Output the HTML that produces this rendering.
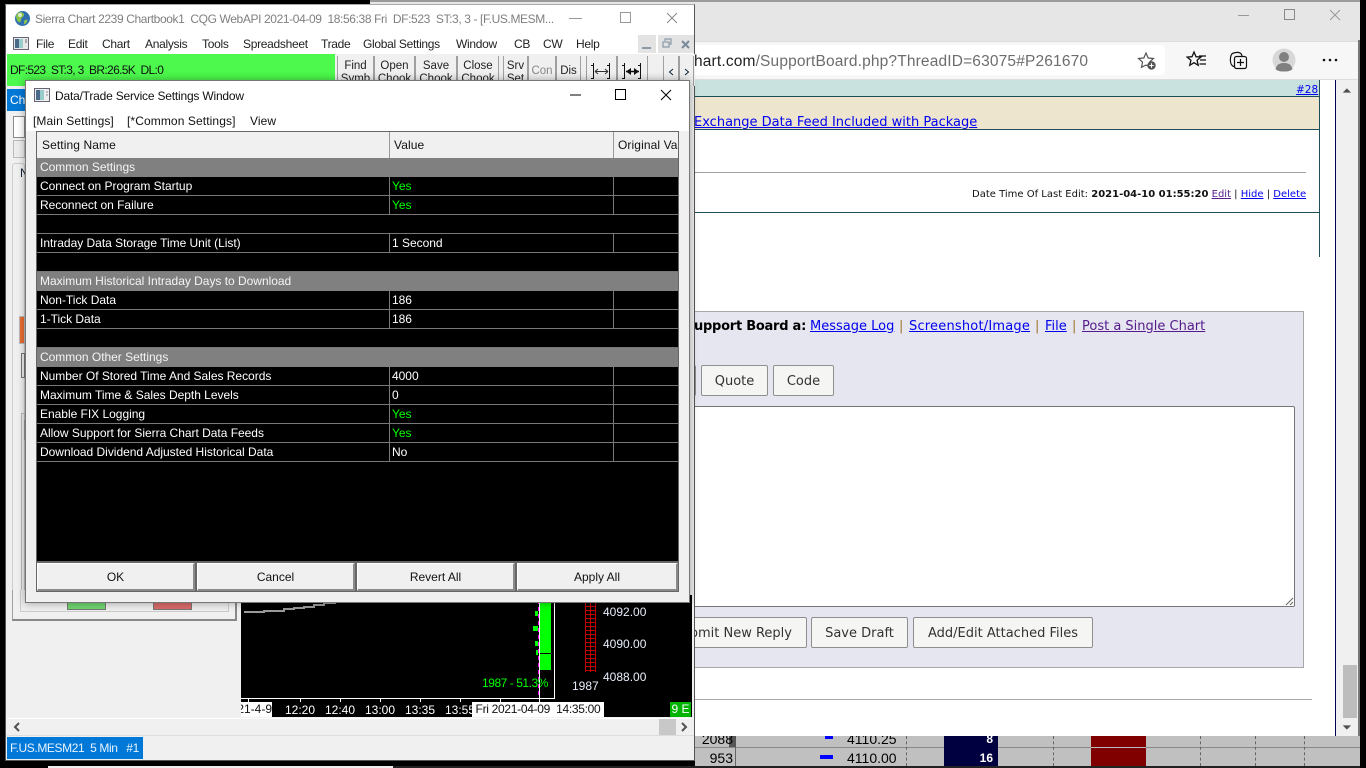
<!DOCTYPE html>
<html><head><meta charset="utf-8"><style>
html,body{margin:0;padding:0;width:1366px;height:768px;overflow:hidden;background:#000}
div,svg{position:absolute}
div{white-space:nowrap;box-sizing:border-box}
body{font:12px "Liberation Sans",sans-serif;color:#000}
.w{font-family:"DejaVu Sans",sans-serif;font-size:13px}
a{color:#00e;text-decoration:underline}
a.v{color:#551a8b}
.b{background:#f5f5f3;border:1px solid #8f8f8f;border-radius:2px;font:13px/27px "DejaVu Sans",sans-serif;color:#333;text-align:center}
.m{top:37px;font-size:12px;line-height:14px;letter-spacing:-.3px;color:#222}
.r{left:37px;width:641px;height:19px;background:#000;border-bottom:1px solid #777;color:#fff;line-height:18px}
.r.h{background:#808080;color:#f4f4f4;border-bottom:0}
.r span{position:absolute;white-space:nowrap;letter-spacing:-.02px}
.r .n{left:3px}.r .val{left:355px}
.r:not(.h):not(.e)::before{content:"";position:absolute;left:352px;top:0;width:1px;height:19px;background:#777}
.r:not(.h):not(.e)::after{content:"";position:absolute;left:576px;top:0;width:1px;height:19px;background:#777}
.y{color:#0f0}
.tb{top:56px;height:30px;background:#f0f0f0;border-left:1px solid #a0a0a0;border-right:1px solid #a0a0a0;text-align:center;line-height:13px;font-size:11.5px;padding-top:3px;color:#222;overflow:hidden}
.ok{top:563px;height:28px;background:#f0f0f0;border:1px solid #fff;border-right:2px solid #8a8a8a;border-bottom:2px solid #8a8a8a;text-align:center;line-height:27px;color:#111}
.ax{top:703px;color:#fff;font-size:12px;line-height:14px}
.g{color:#e8eefc;font-size:12px;line-height:14px}
.d{top:736px;height:30px;border-left:1px dashed #666}
</style></head><body>

<!-- background bottom table -->
<div style="left:695px;top:736px;width:665px;height:30px;background:#c0c0c0"></div>
<div style="left:695px;top:747px;width:665px;height:1px;background:#888"></div>
<div style="left:729px;top:736px;width:7px;height:11px;background:#555"></div>
<div style="left:735px;top:747px;width:1px;height:19px;background:#666"></div>
<div style="left:944px;top:736px;width:54px;height:30px;background:#000040"></div>
<div style="left:1091px;top:736px;width:55px;height:30px;background:#800000"></div>
<div style="left:1091px;top:747px;width:55px;height:1px;background:#bbb"></div>
<div style="left:696px;top:731px;width:37px;text-align:right;font-size:14px;line-height:16px;">2088</div>
<div style="left:696px;top:750px;width:37px;text-align:right;font-size:14px;line-height:16px;">953</div>
<div style="left:825px;top:736px;width:8px;height:3px;background:#00f"></div>
<div style="left:820px;top:755px;width:13px;height:4px;background:#00f"></div>
<div style="left:847px;top:731px;font-size:14px;line-height:16px">4110.25</div>
<div style="left:847px;top:750px;font-size:14px;line-height:16px">4110.00</div>
<div style="left:944px;top:731px;width:49px;text-align:right;color:#fff;font-weight:bold;font-size:12px;line-height:16px">8</div>
<div style="left:944px;top:750px;width:49px;text-align:right;color:#fff;font-weight:bold;font-size:12px;line-height:16px">16</div>
<div class="d" style="left:906px"></div>
<div class="d" style="left:1053px"></div>
<div class="d" style="left:1200px"></div>
<div class="d" style="left:1255px"></div>
<div class="d" style="left:1304px"></div>
<div style="left:48px;top:766px;width:345px;height:2px;background:#eee"></div>
<div style="left:393px;top:766px;width:967px;height:2px;background:#222"></div>

<!-- Browser -->
<div style="left:370px;top:0;width:990px;height:41px;background:#e6e6e6;border-top:2px solid #9a9a9a"></div>
<div style="left:690px;top:41px;width:670px;height:39px;background:#f7f7f7;border-top:1px solid #dcdcdc;border-bottom:1px solid #ddd"></div>
<div style="left:690px;top:45px;width:475px;height:30px;background:#fff;border-radius:4px"></div>
<div style="left:694px;top:52px;font-size:15.5px;line-height:20px;letter-spacing:.16px;color:#222">hart.com<span style="color:#6d6d6d">/SupportBoard.php?ThreadID=63075#P261670</span></div>

<svg style="left:1237px;top:8px" width="14" height="14" viewBox="0 0 14 14"><path d="M1 7.500H12" stroke="#999" stroke-width="1"/></svg>
<svg style="left:1284px;top:9px" width="11" height="11"><rect x=".5" y=".5" width="10" height="10" fill="none" stroke="#888"/></svg>
<svg style="left:1329px;top:9px" width="12" height="12"><path d="M1 1L11 11M11 1L1 11" stroke="#999" stroke-width="1"/></svg>
<svg style="left:1136px;top:50px" width="22" height="22" viewBox="0 0 22 22"><path d="M10 3l2.200 5 5.300.5-4 3.600 1 5.200L10 15l-4.500 2.300 1-5.200-4-3.600L7.800 8z" fill="none" stroke="#555" stroke-width="1.200"/><circle cx="15.500" cy="15.500" r="4.200" fill="#555"/><path d="M13.300 15.500h4.400M15.500 13.300v4.400" stroke="#fff" stroke-width="1"/></svg>
<svg style="left:1185px;top:49px" width="22" height="22" viewBox="0 0 22 22"><path d="M9 3l2 4.700 4.800.4-3.700 3.200 1.100 5L9 13.700 4.800 16.300l1.100-5L2.200 8.100 7 7.700z" fill="none" stroke="#111" stroke-width="1.300"/><path d="M14 7h7M15 11h6M14.500 15h6.500" stroke="#111" stroke-width="1.200"/></svg>
<svg style="left:1228px;top:50px" width="22" height="22" viewBox="0 0 22 22"><path d="M7 17C3 16 2 13 2.500 8 3 4 4 3 8 2.500 11 2 13.500 3 14 6" fill="none" stroke="#111" stroke-width="1.200"/><rect x="6.500" y="6.500" width="12" height="12" rx="2" fill="#f7f7f7" stroke="#111" stroke-width="1.200"/><path d="M12.500 9v7M9 12.500h7" stroke="#111" stroke-width="1.200"/></svg>
<svg style="left:1272px;top:48px" width="24" height="24" viewBox="0 0 24 24"><circle cx="12" cy="12" r="11.500" fill="#d8d8d8"/><circle cx="12" cy="9" r="5" fill="#808080"/><path d="M3.500 21C5 16 8 15 12 15s7 1 8.500 6C18 23.500 15 23.500 12 23.500S6 23.500 3.500 21z" fill="#808080"/></svg>
<svg style="left:1322px;top:58px" width="16" height="4"><circle cx="2" cy="2" r="1.300" fill="#111"/><circle cx="8" cy="2" r="1.300" fill="#111"/><circle cx="14" cy="2" r="1.300" fill="#111"/></svg>

<!-- page -->
<div style="left:690px;top:80px;width:670px;height:656px;background:#fff"></div>
<div style="left:1336px;top:80px;width:24px;height:656px;background:#f0f0f0"></div>
<div style="left:1335px;top:80px;width:1px;height:656px;background:#000050"></div>
<div style="left:1358px;top:40px;width:2px;height:696px;background:#777"></div>
<div style="left:1319px;top:80px;width:1px;height:177px;background:#1f4e5a"></div>
<div style="left:690px;top:97px;width:629px;height:32px;background:#eee5cf"></div>
<div style="left:690px;top:80px;width:629px;height:16px;background:#c9e2df"></div>
<div style="left:690px;top:96px;width:629px;height:1px;background:#1f4e5a"></div>
<div style="left:690px;top:129px;width:629px;height:1px;background:#1f4e5a"></div>
<div style="left:690px;top:212px;width:629px;height:1px;background:#1f4e5a"></div>
<div style="left:690px;top:172px;width:616px;height:1px;background:#a0a0a0"></div>
<div class="w" style="left:1296px;top:84px;font-size:10.500px;line-height:13px"><a>#28</a></div>
<div class="w" style="left:694px;top:115px;line-height:16px"><a>Exchange Data Feed Included with Package</a></div>
<div class="w" style="left:972px;top:188px;font-size:10px;line-height:14px;color:#111">Date Time Of Last Edit: <b>2021-04-10 01:55:20</b> <a class="v">Edit</a> | <a>Hide</a> | <a>Delete</a></div>

<div style="left:690px;top:311px;width:614px;height:357px;background:#e6e6f0;border:1px solid #a8a8a8"></div>
<div class="w" style="left:694px;top:318px;line-height:17px;color:#000;font-weight:bold;letter-spacing:-.25px">upport Board a:</div>
<div class="w" style="left:810px;top:318px;line-height:17px"><a>Message Log</a></div>
<div class="w" style="left:899px;top:318px;line-height:17px;color:#a07830">|</div>
<div class="w" style="left:909px;top:318px;line-height:17px;letter-spacing:.2px"><a>Screenshot/Image</a></div>
<div class="w" style="left:1035px;top:318px;line-height:17px;color:#a07830">|</div>
<div class="w" style="left:1045px;top:318px;line-height:17px"><a>File</a></div>
<div class="w" style="left:1072px;top:318px;line-height:17px;color:#a07830">|</div>
<div class="w" style="left:1082px;top:318px;line-height:17px"><a class="v">Post a Single Chart</a></div>
<div class="b" style="left:690px;top:365px;width:6px;height:31px"></div>
<div class="b" style="left:701px;top:365px;width:67px;height:31px;line-height:31px">Quote</div>
<div class="b" style="left:773px;top:365px;width:61px;height:31px;line-height:31px">Code</div>
<div style="left:690px;top:406px;width:605px;height:201px;background:#fff;border:1px solid #767676;border-radius:2px"></div>
<svg style="left:1284px;top:596px" width="10" height="10"><path d="M2 9L9 2M6 9L9 6" stroke="#666"/></svg>
<div class="b" style="left:680px;top:617px;width:127px;height:31px;line-height:31px"><span style="position:absolute;right:14px">Submit New Reply</span></div>
<div class="b" style="left:811px;top:617px;width:97px;height:31px;line-height:31px">Save Draft</div>
<div class="b" style="left:913px;top:617px;width:180px;height:31px;line-height:31px">Add/Edit Attached Files</div>
<div style="left:690px;top:699px;width:622px;height:1px;background:#a8a8a8"></div>
<svg style="left:1340px;top:86px" width="14" height="10"><path d="M1 8L7 2L13 8z" fill="#505050" transform="translate(2 1) scale(.7)"/></svg>
<svg style="left:1340px;top:723px" width="14" height="10"><path d="M1 2L7 8L13 2z" fill="#505050" transform="translate(2 1) scale(.7)"/></svg>
<div style="left:1343px;top:665px;width:14px;height:53px;background:#bdbdbd"></div>

<!-- Sierra Chart window -->
<div style="left:0;top:0;width:370px;height:4px;background:#000"></div>
<div style="left:5px;top:4px;width:690px;height:757px;background:#f0f0f0;border:1px solid #555;border-top:1px solid #aaa"></div>
<div style="left:6px;top:5px;width:688px;height:68px;background:#fff"></div>
<svg style="left:14px;top:10px" width="17" height="17" viewBox="0 0 17 17"><circle cx="8.500" cy="8.500" r="7.500" fill="#2e6fb0"/><path d="M4 3c3-2 6 0 6 2s-3 2-3 5-3 3-4 0-2-4 1-7zM11 10c2-1 3 0 2 2s-3 3-3 1 0-2 1-3z" fill="#8bc34a"/><circle cx="6" cy="5" r="2" fill="#d8ecc0"/></svg>
<div style="left:35px;top:12px;font-size:12px;line-height:14px;color:#7f7f7f;letter-spacing:-.38px">Sierra Chart 2239 Chartbook1&nbsp; CQG WebAPI 2021-04-09&nbsp; 18:56:38 Fri&nbsp; DF:523&nbsp; ST:3, 3 - [F.US.MESM...</div>
<svg style="left:569px;top:13px" width="14" height="14"><path d="M0 5.500H13" stroke="#999"/></svg>
<svg style="left:620px;top:12px" width="11" height="11"><rect x=".5" y=".5" width="10" height="10" fill="none" stroke="#999"/></svg>
<svg style="left:666px;top:12px" width="12" height="12"><path d="M1 1L11 11M11 1L1 11" stroke="#888"/></svg>

<svg style="left:13px;top:37px" width="16" height="13" viewBox="0 0 16 13"><rect x=".5" y=".5" width="15" height="12" fill="#e8e8e8" stroke="#667"/><rect x="2" y="2" width="4" height="9" fill="#4a6a8a"/><rect x="6" y="2" width="4" height="9" fill="#9cc"/><path d="M12 3h2M12 5h2" stroke="#667"/></svg>
<div class="m" style="left:36px">File</div><div class="m" style="left:68px">Edit</div><div class="m" style="left:102px">Chart</div><div class="m" style="left:145px">Analysis</div><div class="m" style="left:202px">Tools</div><div class="m" style="left:243px">Spreadsheet</div><div class="m" style="left:321px">Trade</div><div class="m" style="left:363px">Global Settings</div><div class="m" style="left:456px">Window</div><div class="m" style="left:514px">CB</div><div class="m" style="left:543px">CW</div><div class="m" style="left:576px">Help</div>
<div style="left:638px;top:35px;width:18px;height:18px;background:#e3e3e3"></div>
<div style="left:658px;top:35px;width:18px;height:18px;background:#e3e3e3"></div>
<div style="left:676px;top:35px;width:18px;height:18px;background:#e3e3e3"></div>
<div style="left:642px;top:47px;width:9px;height:2px;background:#8a9aa8"></div>
<svg style="left:662px;top:38px" width="11" height="11"><path d="M3 3V1H9V6H7M1 4H7V9H1Z" fill="none" stroke="#8a9aa8" stroke-width="1.200"/></svg>
<svg style="left:680px;top:39px" width="11" height="11"><path d="M2 2L9 9M9 2L2 9" stroke="#7a8a98" stroke-width="2"/></svg>

<div style="left:7px;top:54px;width:328px;height:32px;background:#4cf94c"></div>
<div style="left:10px;top:63px;font-size:12px;line-height:14px;letter-spacing:-.65px;color:#111">DF:523&nbsp; ST:3, 3&nbsp; BR:26.5K&nbsp; DL:0</div>
<div style="left:335px;top:54px;width:360px;height:32px;background:#f0f0f0"></div>
<div class="tb" style="left:337px;width:37px;padding-top:4px">Find<br>Symb</div>
<div class="tb" style="left:374px;width:41px;padding-top:4px">Open<br>Chook</div>
<div class="tb" style="left:415px;width:42px;padding-top:4px">Save<br>Chook</div>
<div class="tb" style="left:457px;width:42px;padding-top:4px">Close<br>Chook</div>
<div class="tb" style="left:503px;width:25px;padding-top:4px">Srv<br>Set</div>
<div class="tb" style="left:528px;width:28px;padding-top:9px;color:#888">Con</div>
<div class="tb" style="left:556px;width:25px;padding-top:9px">Dis</div>
<div class="tb" style="left:586px;width:31px"></div>
<div class="tb" style="left:617px;width:31px"></div>
<svg style="left:590px;top:62px" width="24" height="20"><path d="M3.500 1V17M19.500 1V17M1 3.500H4M1 16.500H4M17 3.500H20M17 16.500H20" stroke="#111"/><path d="M5 9.500H18M5 9.500L8 7M5 9.500L8 12M18 9.500L15 7M18 9.500L15 12" stroke="#333" fill="none"/></svg>
<svg style="left:621px;top:62px" width="24" height="20"><path d="M3.500 1V17M19.500 1V17M1 3.500H4M1 16.500H4M17 3.500H20M17 16.500H20" stroke="#111"/><path d="M5 9.500H18" stroke="#111" stroke-width="1.500"/><path d="M5 9.500L10 6V13zM18 9.500L13 6V13z" fill="#111"/></svg>
<div class="tb" style="left:663px;width:16px"></div><div class="tb" style="left:679px;width:15px"></div>
<svg style="left:668px;top:68px" width="6" height="8"><path d="M5 1L1.500 4L5 7" fill="none" stroke="#123"/></svg>
<svg style="left:684px;top:68px" width="6" height="8"><path d="M1 1L4.500 4L1 7" fill="none" stroke="#123"/></svg>

<!-- behind dialog -->
<div style="left:7px;top:89px;width:18px;height:22px;background:#0078d7;color:#fff;line-height:22px;padding-left:3px;font-size:12px;overflow:hidden">Ch</div>
<div style="left:13px;top:116px;width:12px;height:22px;background:#fff;border:1px solid #8a8a8a"></div>
<div style="left:13px;top:140px;width:12px;height:18px;background:#ececec;border:1px solid #bbb"></div>
<div style="left:12px;top:163px;width:13px;height:430px;background:#f0f0f0;border:1px solid #ccc;border-radius:3px"></div>
<div style="left:20px;top:166px;font-size:12px;line-height:14px;color:#123">N</div>
<div style="left:19px;top:316px;width:6px;height:28px;background:#ea6d33;border:1px solid #bbb"></div>
<div style="left:21px;top:353px;width:4px;height:25px;border:1px solid #777;background:#f0f0f0"></div>
<div style="left:21px;top:413px;width:4px;height:189px;border:1px solid #bbb;background:#eee"></div>
<div style="left:24px;top:420px;width:1px;height:20px;background:#999"></div>
<div style="left:12px;top:590px;width:225px;height:31px;background:#f0f0f0;border:1px solid #a0a0a0;border-top:0;border-right:2px solid #888;border-bottom:2px solid #888"></div>
<div style="left:20px;top:590px;width:209px;height:22px;background:#eee;border:1px solid #ccc;border-top:0"></div>
<div style="left:67px;top:600px;width:39px;height:10px;background:#6fd56f;border:1px solid #777;border-top:0"></div>
<div style="left:153px;top:600px;width:39px;height:10px;background:#d96a6a;border:1px solid #777;border-top:0"></div>

<!-- chart -->
<div style="left:241px;top:595px;width:451px;height:122px;background:#000"></div>
<svg style="left:241px;top:595px" width="455" height="125" viewBox="241 595 455 125">
<path d="M244 612H264V611H284V609H294V608H304V607H314V605H324V603H336" stroke="#9a9a9a" stroke-width="2" fill="none"/>
<path d="M241 698.500H554.500V595" stroke="#fff" fill="none"/>
<rect x="539" y="600" width="12" height="70" fill="#0f0"/><path d="M539 653.500H551" stroke="#000"/>
<path d="M539.500 600V717" stroke="#fff"/>
<path d="M538.500 600V695" stroke="#f0f" stroke-dasharray="4 3"/>
<rect x="535" y="611" width="3" height="5" fill="#0f0"/><rect x="533" y="626" width="5" height="5" fill="#0f0"/><rect x="535" y="641" width="3" height="5" fill="#0f0"/><rect x="536" y="650" width="2" height="5" fill="#0f0"/>
<path d="M585 602.500H596M585 606.500H596M585 610.500H596M585 614.500H596M585 618.500H596M585 622.500H596M585 626.500H596M585 630.500H596M585 634.500H596M585 638.500H596M585 642.500H596M585 646.500H596M585 650.500H596M585 654.500H596M585 658.500H596M585 662.500H596M585 666.500H596M585 670.500H596M585.500 600V672M590.500 600V672M595.500 600V672" stroke="#c00000" stroke-width="1"/>
<path d="M248.500 698V702M300.500 698V702M340.500 698V702M380.500 698V702M420.500 698V702M460.500 698V702M500.500 698V702" stroke="#fff"/>
</svg>
<div class="g" style="left:603px;top:605px">4092.00</div>
<div class="g" style="left:603px;top:637px">4090.00</div>
<div class="g" style="left:603px;top:670px">4088.00</div>
<div style="left:482px;top:676px;color:#0f0;line-height:14px;font-size:12px;letter-spacing:-.45px">1987 - 51.3%</div>
<div class="g" style="left:572px;top:679px">1987</div>
<div style="left:241px;top:702px;width:31px;height:15px;background:#fff;color:#111;line-height:15px;overflow:hidden;direction:rtl;text-align:left;font-size:12px">21-4-9</div>
<div class="ax" style="left:285px">12:20</div><div class="ax" style="left:325px">12:40</div><div class="ax" style="left:365px">13:00</div><div class="ax" style="left:405px">13:35</div><div class="ax" style="left:445px">13:55</div>
<div style="left:472px;top:702px;width:132px;height:15px;background:#fff;color:#111;text-align:center;line-height:15px;font-size:12px;letter-spacing:-.3px">Fri 2021-04-09&nbsp; 14:35:00</div>
<div style="left:670px;top:702px;width:21px;height:15px;background:#00b400;color:#fff;text-align:center;line-height:15px;font-size:12px">9 E</div>

<!-- scrollbar & tab -->
<div style="left:7px;top:718px;width:687px;height:18px;background:#f0f0f0;border-top:1px solid #fff;border-bottom:1px solid #ddd"></div>
<svg style="left:12px;top:722px" width="9" height="10"><path d="M7 1L3 5L7 9" fill="none" stroke="#505050" stroke-width="2"/></svg>
<svg style="left:680px;top:722px" width="9" height="10"><path d="M2 1L6 5L2 9" fill="none" stroke="#505050" stroke-width="2"/></svg>
<div style="left:659px;top:719px;width:17px;height:16px;background:#c8c8c8"></div>
<div style="left:7px;top:737px;width:136px;height:22px;background:#0078d7;color:#e8f4ff;font-size:12px;line-height:23px;padding-left:3px;letter-spacing:-.4px">F.US.MESM21&nbsp; 5 Min&nbsp; &nbsp;#1</div>

<!-- Dialog -->
<div style="left:25px;top:80px;width:665px;height:523px;background:#f0f0f0;border:1px solid #777;box-shadow:0 0 8px rgba(0,0,0,.35)"></div>
<div style="left:26px;top:81px;width:663px;height:50px;background:#fff"></div>
<svg style="left:34px;top:88px" width="16" height="14" viewBox="0 0 16 14"><rect x=".5" y=".5" width="15" height="13" fill="#eee" stroke="#667"/><rect x="2" y="2" width="4" height="10" fill="#4a6a8a"/><rect x="6" y="2" width="4" height="10" fill="#9cc"/><path d="M12 4h2M12 7h2" stroke="#889"/></svg>
<div style="left:55px;top:89px;font-size:12px;line-height:14px;letter-spacing:-.2px;color:#111">Data/Trade Service Settings Window</div>
<svg style="left:570px;top:94px" width="12" height="2"><path d="M0 1H11" stroke="#000"/></svg>
<svg style="left:615px;top:89px" width="11" height="11"><rect x=".5" y=".5" width="10" height="10" fill="none" stroke="#000"/></svg>
<svg style="left:660px;top:89px" width="12" height="12"><path d="M1 1L11 11M11 1L1 11" stroke="#000"/></svg>
<div style="left:33px;top:114px;line-height:14px;letter-spacing:.1px;color:#111">[Main Settings]</div>
<div style="left:127px;top:114px;line-height:14px;letter-spacing:.1px;color:#111">[*Common Settings]</div>
<div style="left:250px;top:114px;line-height:14px;letter-spacing:.1px;color:#111">View</div>

<div style="left:36px;top:131px;width:643px;height:431px;background:#000;border:1px solid #666"></div>
<div style="left:37px;top:132px;width:641px;height:26px;background:#f0f0f0"></div>
<div style="left:389px;top:132px;width:1px;height:26px;background:#999"></div>
<div style="left:613px;top:132px;width:1px;height:26px;background:#999"></div>
<div style="left:42px;top:138px;line-height:14px;letter-spacing:.1px;color:#111">Setting Name</div>
<div style="left:394px;top:138px;line-height:14px;letter-spacing:.1px;color:#111">Value</div>
<div style="left:618px;top:138px;width:60px;overflow:hidden;line-height:14px;letter-spacing:.1px;color:#111">Original Value</div>

<div class="r h" style="top:158px"><span class="n">Common Settings</span></div>
<div class="r" style="top:177px"><span class="n">Connect on Program Startup</span><span class="val y">Yes</span></div>
<div class="r" style="top:196px"><span class="n">Reconnect on Failure</span><span class="val y">Yes</span></div>
<div class="r e" style="top:215px"></div>
<div class="r" style="top:234px"><span class="n">Intraday Data Storage Time Unit (List)</span><span class="val">1 Second</span></div>
<div class="r e" style="top:253px"></div>
<div class="r h" style="top:272px"><span class="n">Maximum Historical Intraday Days to Download</span></div>
<div class="r" style="top:291px"><span class="n">Non-Tick Data</span><span class="val">186</span></div>
<div class="r" style="top:310px"><span class="n">1-Tick Data</span><span class="val">186</span></div>
<div class="r e" style="top:329px"></div>
<div class="r h" style="top:348px"><span class="n">Common Other Settings</span></div>
<div class="r" style="top:367px"><span class="n">Number Of Stored Time And Sales Records</span><span class="val">4000</span></div>
<div class="r" style="top:386px"><span class="n">Maximum Time &amp; Sales Depth Levels</span><span class="val">0</span></div>
<div class="r" style="top:405px"><span class="n">Enable FIX Logging</span><span class="val y">Yes</span></div>
<div class="r" style="top:424px"><span class="n">Allow Support for Sierra Chart Data Feeds</span><span class="val y">Yes</span></div>
<div class="r" style="top:443px"><span class="n">Download Dividend Adjusted Historical Data</span><span class="val">No</span></div>

<div style="left:36px;top:561px;width:643px;height:31px;background:#666"></div>
<div class="ok" style="left:37px;width:158px">OK</div>
<div class="ok" style="left:197px;width:158px">Cancel</div>
<div class="ok" style="left:357px;width:158px">Revert All</div>
<div class="ok" style="left:517px;width:161px">Apply All</div>
</body></html>
